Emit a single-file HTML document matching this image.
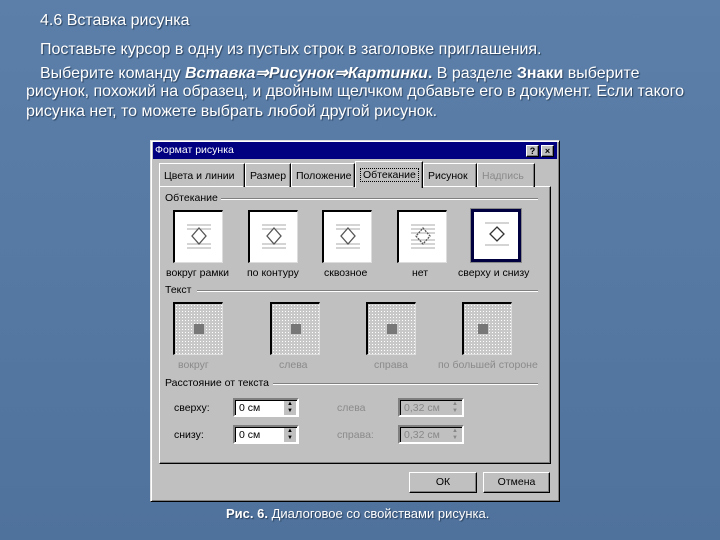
<!DOCTYPE html>
<html><head><meta charset="utf-8"><style>
*{margin:0;padding:0;box-sizing:border-box}
body{width:720px;height:540px;overflow:hidden;position:relative;background:linear-gradient(180deg,#5b7fa8 0%,#5579a3 50%,#4f729c 100%);font-family:"Liberation Sans",sans-serif}
.t{position:absolute;color:#fff;font-size:16px;white-space:nowrap;text-shadow:1px 1px 1px #2a3f5c;letter-spacing:0}
.d{position:absolute;left:150px;top:140px;width:410px;height:362px;background:#c0c0c0;border:1px solid;border-color:#dfdfdf #000 #000 #dfdfdf;box-shadow:inset 1px 1px #fff,inset -1px -1px #808080}
.a{position:absolute;font-size:10.5px;color:#000;white-space:nowrap}
.g{color:#8a8a8a}
.ic{position:absolute;width:50px;height:53px;background:#fff;border-top:2px solid #000;border-left:2px solid #000;border-right:1px solid #ddd;border-bottom:1px solid #ddd}
.ic svg{position:absolute;left:0;top:0}
.dis{background:#c8c8c8;background-image:radial-gradient(#fff 0.6px,transparent 0.7px);background-size:3px 3px}
.in{position:absolute;width:66px;height:19px;background:#fff;border:2px solid;border-color:#808080 #fff #fff #808080;box-shadow:inset 1px 1px #000;font-size:10.5px;padding:2px 4px}
.in.x{background:#c0c0c0;color:#888}
.sp{position:absolute;right:1px;top:1px;width:12px;height:14px;background:#c0c0c0;font-size:6px;line-height:7px;text-align:center}
.btn{position:absolute;height:21px;background:#c0c0c0;border:1px solid;border-color:#fff #000 #000 #fff;box-shadow:inset -1px -1px #808080;font-size:10.5px;text-align:center;line-height:19px}
.tab{position:absolute;top:22px;height:24px;border:1px solid;border-color:#fff #000 transparent #fff;border-bottom:none;font-size:10.5px;padding:6px 4px 0;box-shadow:inset -1px 0 #808080}
.hl{position:absolute;height:2px;border-top:1px solid #808080;border-bottom:1px solid #fff}
</style></head><body>
<div class="t" style="left:40px;top:12px">4.6 Вставка рисунка</div>
<div class="t" style="left:40px;top:41px">Поставьте курсор в одну из пустых строк в заголовке приглашения.</div>
<div class="t" style="left:40px;top:63px">Выберите команду <b><i>Вставка⇒Рисунок⇒Картинки</i>.</b> В разделе <b>Знаки</b> выберите</div>
<div class="t" style="left:26px;top:83px">рисунок, похожий на образец, и двойным щелчком добавьте его в документ. Если такого</div>
<div class="t" style="left:26px;top:103px">рисунка нет, то можете выбрать любой другой рисунок.</div>

<div class="d">
 <div style="position:absolute;left:2px;top:1px;right:2px;height:17px;background:#000080"></div>
 <div class="a" style="left:4px;top:3px;color:#fff;font-size:10.5px">Формат рисунка</div>
 <div class="btn" style="left:375px;top:4px;width:13px;height:12px;line-height:10px;font-size:9px;font-weight:bold">?</div>
 <div class="btn" style="left:390px;top:4px;width:13px;height:12px;line-height:10px;font-size:9px;font-weight:bold">×</div>
 <div style="position:absolute;left:8px;top:45px;width:392px;height:278px;border:1px solid;border-color:#fff #000 #000 #fff;box-shadow:inset -1px -1px #808080"></div>
 <div class="tab" style="left:8px;width:86px">Цвета и линии</div>
 <div class="tab" style="left:94px;width:46px">Размер</div>
 <div class="tab" style="left:140px;width:64px">Положение</div>
 <div class="tab" style="left:204px;top:20px;height:27px;width:68px;background:#c0c0c0;padding-top:7px"><span style="border:1px dotted #000;padding:0 2px">Обтекание</span></div>
 <div class="tab" style="left:272px;width:54px">Рисунок</div>
 <div class="tab g" style="left:326px;width:58px">Надпись</div>

 <div class="a" style="left:14px;top:51px">Обтекание</div><div class="hl" style="left:70px;top:57px;width:317px"></div>
 <div class="a" style="left:14px;top:143px">Текст</div><div class="hl" style="left:46px;top:149px;width:341px"></div>
 <div class="a" style="left:14px;top:236px">Расстояние от текста</div><div class="hl" style="left:122px;top:242px;width:265px"></div>

 <div class="ic" style="left:22px;top:69px"><svg width="48" height="50"><g stroke="#aaa"><line x1="12" y1="13" x2="36" y2="13"/><line x1="12" y1="17" x2="36" y2="17"/><line x1="12" y1="32" x2="36" y2="32"/><line x1="12" y1="36" x2="36" y2="36"/></g><path d="M24 16 L31 24 L24 32 L17 24Z" fill="#fff" stroke="#555" stroke-width="1.3"/></svg></div>
 <div class="ic" style="left:97px;top:69px"><svg width="48" height="50"><g stroke="#aaa"><line x1="12" y1="13" x2="36" y2="13"/><line x1="12" y1="17" x2="36" y2="17"/><line x1="12" y1="32" x2="36" y2="32"/><line x1="12" y1="36" x2="36" y2="36"/></g><path d="M24 16 L31 24 L24 32 L17 24Z" fill="#fff" stroke="#555" stroke-width="1.3"/></svg></div>
 <div class="ic" style="left:171px;top:69px"><svg width="48" height="50"><g stroke="#aaa"><line x1="12" y1="13" x2="36" y2="13"/><line x1="12" y1="17" x2="36" y2="17"/><line x1="12" y1="32" x2="36" y2="32"/><line x1="12" y1="36" x2="36" y2="36"/></g><path d="M24 16 L31 24 L24 32 L17 24Z" fill="#fff" stroke="#555" stroke-width="1.3"/></svg></div>
 <div class="ic" style="left:246px;top:69px"><svg width="48" height="50"><g stroke="#aaa"><line x1="12" y1="13" x2="36" y2="13"/><line x1="12" y1="17" x2="36" y2="17"/><line x1="12" y1="21" x2="36" y2="21"/><line x1="12" y1="28" x2="36" y2="28"/><line x1="12" y1="32" x2="36" y2="32"/><line x1="12" y1="36" x2="36" y2="36"/></g><path d="M24 16 L31 24 L24 32 L17 24Z" fill="none" stroke="#555" stroke-width="1.3" stroke-dasharray="2 1"/></svg></div>
 <div class="ic" style="left:320px;top:68px;border:3px solid #000040;box-shadow:0 0 0 1px #888"><svg width="46" height="48"><g stroke="#aaa"><line x1="11" y1="11" x2="35" y2="11"/><line x1="11" y1="33" x2="35" y2="33"/></g><path d="M23 15 L30 22 L23 29 L16 22Z" fill="#fff" stroke="#333" stroke-width="1.3"/></svg></div>
 <div class="a" style="left:15px;top:126px">вокруг рамки</div>
 <div class="a" style="left:96px;top:126px">по контуру</div>
 <div class="a" style="left:173px;top:126px">сквозное</div>
 <div class="a" style="left:261px;top:126px">нет</div>
 <div class="a" style="left:307px;top:126px">сверху и снизу</div>

 <div class="ic dis" style="left:22px;top:161px"><svg width="48" height="50"><rect x="19" y="20" width="10" height="10" fill="#777"/></svg></div>
 <div class="ic dis" style="left:119px;top:161px"><svg width="48" height="50"><rect x="19" y="20" width="10" height="10" fill="#777"/></svg></div>
 <div class="ic dis" style="left:215px;top:161px"><svg width="48" height="50"><rect x="19" y="20" width="10" height="10" fill="#777"/></svg></div>
 <div class="ic dis" style="left:311px;top:161px"><svg width="48" height="50"><rect x="14" y="20" width="10" height="10" fill="#777"/></svg></div>
 <div class="a g" style="left:27px;top:218px">вокруг</div>
 <div class="a g" style="left:128px;top:218px">слева</div>
 <div class="a g" style="left:223px;top:218px">справа</div>
 <div class="a g" style="left:287px;top:218px">по большей стороне</div>

 <div class="a" style="left:23px;top:261px">сверху:</div>
 <div class="in" style="left:82px;top:257px">0 см<div class="sp">▲<br>▼</div></div>
 <div class="a g" style="left:186px;top:261px">слева</div>
 <div class="in x" style="left:247px;top:257px">0,32 см<div class="sp">▲<br>▼</div></div>
 <div class="a" style="left:23px;top:288px">снизу:</div>
 <div class="in" style="left:82px;top:284px">0 см<div class="sp">▲<br>▼</div></div>
 <div class="a g" style="left:186px;top:288px">справа:</div>
 <div class="in x" style="left:247px;top:284px">0,32 см<div class="sp">▲<br>▼</div></div>

 <div class="btn" style="left:258px;top:331px;width:68px">ОК</div>
 <div class="btn" style="left:332px;top:331px;width:67px">Отмена</div>
</div>
<div class="t" style="left:226px;top:506px;font-size:13px;letter-spacing:0"><b>Рис. 6.</b> Диалоговое со свойствами рисунка.</div>
</body></html>
